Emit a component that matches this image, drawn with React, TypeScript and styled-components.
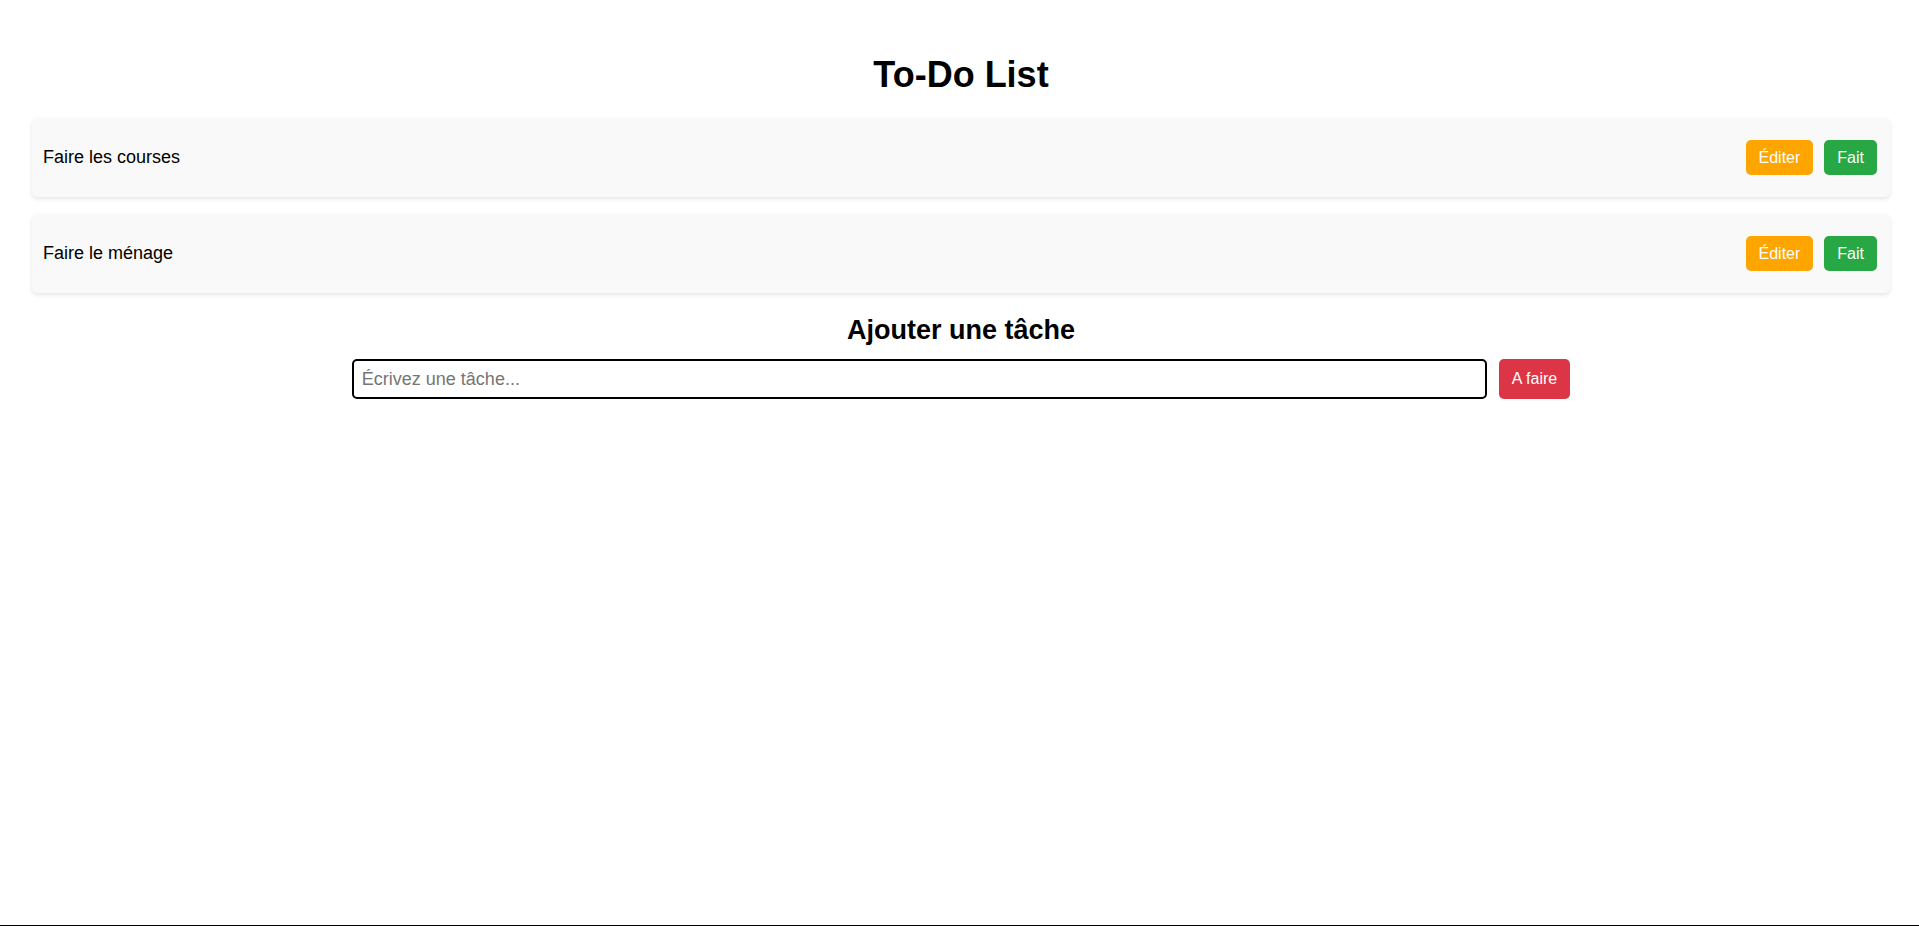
import { useState } from "react";
import styled, { createGlobalStyle } from "styled-components";

const GlobalStyle = createGlobalStyle`
  * {
    box-sizing: border-box;
  }
  body {
    margin: 0;
    background: #ffffff;
    font-family: "Liberation Sans", Arial, sans-serif;
    color: #000000;
  }
`;

const Page = styled.div`
  min-height: 100vh;
  display: flex;
  flex-direction: column;
  padding: 55px 29px 0 32px;
  border-bottom: 1px solid #000000;
`;

const Title = styled.h1`
  margin: 0 0 24px;
  font-size: 36px;
  font-weight: 700;
  line-height: 39px;
  text-align: center;
`;

const List = styled.ul`
  list-style: none;
  margin: 0;
  padding: 0;
  display: flex;
  flex-direction: column;
  gap: 17px;
`;

const Item = styled.li`
  height: 79px;
  display: flex;
  align-items: center;
  justify-content: space-between;
  padding: 0 13px 0 11px;
  background: #f9f9f9;
  border-radius: 5px;
  box-shadow: 0 2px 4px rgba(0, 0, 0, 0.1);
  font-size: 18px;
`;

const Actions = styled.div`
  display: flex;
  gap: 11px;
`;

const Button = styled.button<{ $color: string }>`
  height: 35px;
  padding: 0 13px;
  border: none;
  border-radius: 5px;
  background: ${(p) => p.$color};
  color: #ffffff;
  font-family: "Liberation Sans", Arial, sans-serif;
  font-size: 16px;
  cursor: pointer;
  &:hover {
    opacity: 0.85;
  }
`;

const SubTitle = styled.h2`
  margin: 22px 0 13px;
  font-size: 27px;
  font-weight: 700;
  line-height: 31px;
  text-align: center;
`;

const Form = styled.form`
  display: flex;
  justify-content: center;
  gap: 12px;
`;

const Input = styled.input`
  width: 1135px;
  height: 40px;
  padding: 0 8px;
  border: 2px solid #000000;
  border-radius: 5px;
  font-family: "Liberation Sans", Arial, sans-serif;
  font-size: 18px;
  outline: none;
  &::placeholder {
    color: #757575;
  }
`;

const AddButton = styled(Button)`
  height: 40px;
`;

export default function App() {
  const [tasks, setTasks] = useState(["Faire les courses", "Faire le ménage"]);
  const [text, setText] = useState("");

  const onSubmit = (e: React.FormEvent<HTMLFormElement>) => {
    e.preventDefault();
    if (text.trim() === "") return;
    setTasks([...tasks, text.trim()]);
    setText("");
  };

  return (
    <>
      <GlobalStyle />
      <Page>
        <Title>To-Do List</Title>
        <List>
          {tasks.map((task, i) => (
            <Item key={i}>
              <span>{task}</span>
              <Actions>
                <Button $color="#ffa500">Éditer</Button>
                <Button
                  $color="#28a745"
                  onClick={() => setTasks(tasks.filter((_, j) => j !== i))}
                >
                  Fait
                </Button>
              </Actions>
            </Item>
          ))}
        </List>
        <SubTitle>Ajouter une tâche</SubTitle>
        <Form onSubmit={onSubmit}>
          <Input
            value={text}
            onChange={(e) => setText(e.target.value)}
            placeholder="Écrivez une tâche..."
          />
          <AddButton type="submit" $color="#dc3545">
            A faire
          </AddButton>
        </Form>
      </Page>
    </>
  );
}
